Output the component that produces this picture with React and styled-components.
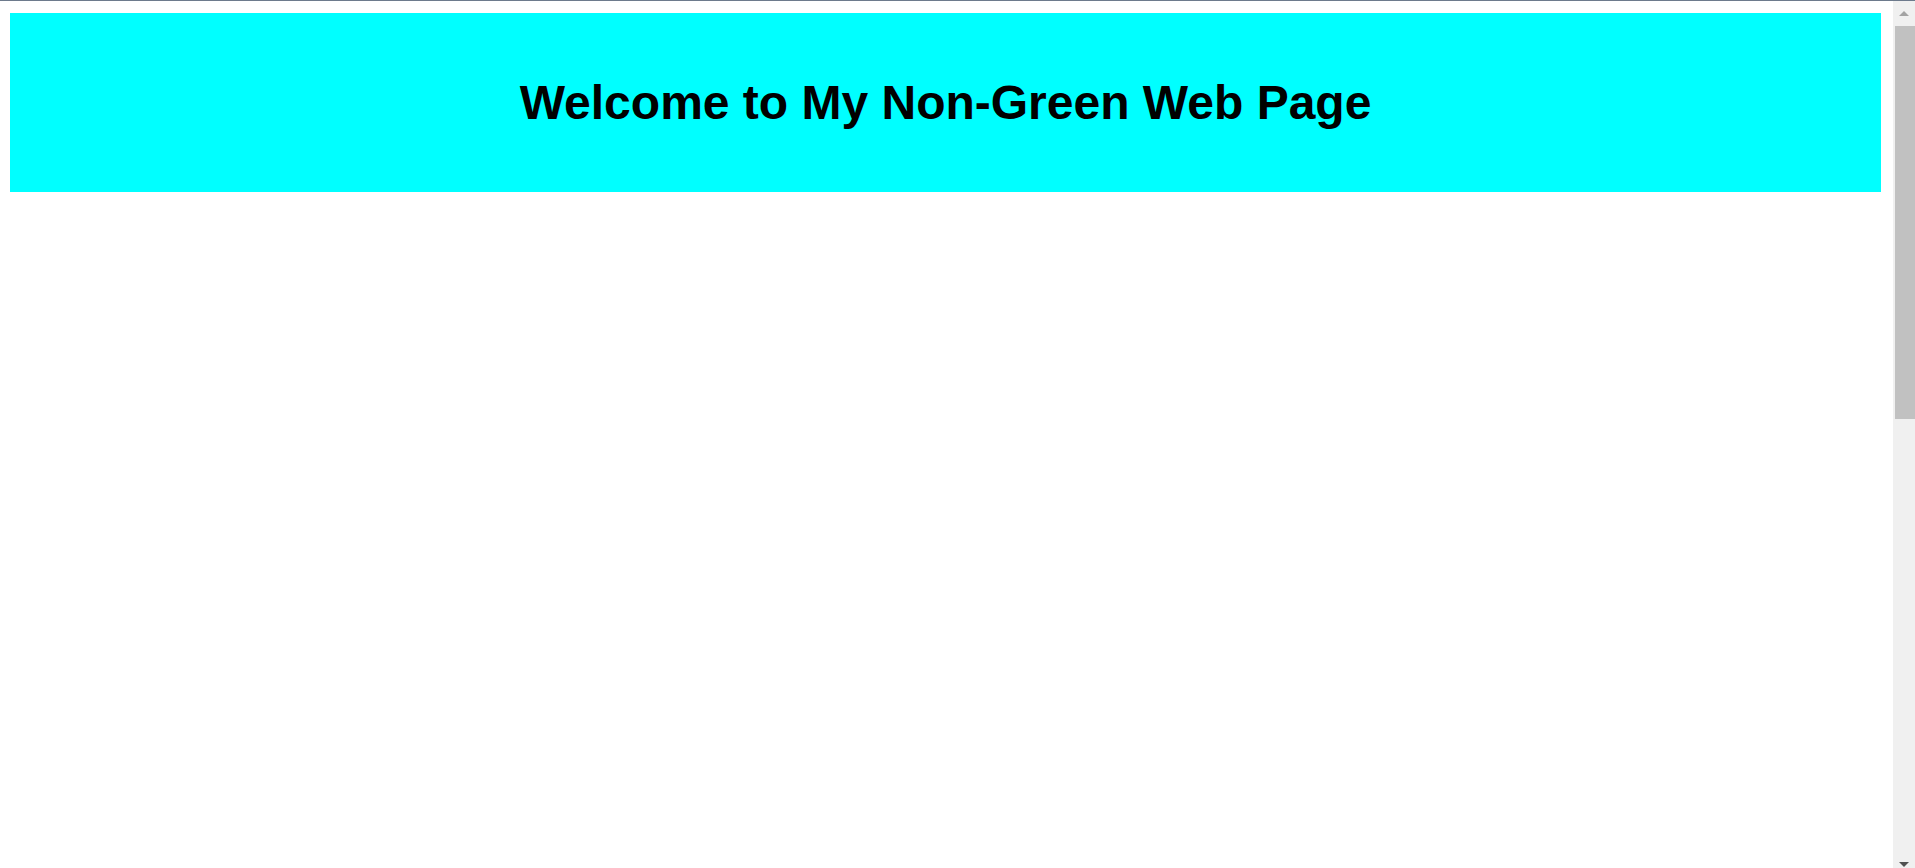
import React from 'react';
import styled, { createGlobalStyle } from 'styled-components';

const trackColor = '#f0f0f0';
const thumbColor = '#c1c1c1';

const GlobalStyle = createGlobalStyle`
    html, body {
        margin: 0;
        padding: 0;
        overflow: hidden;
        background: #ffffff;
    }
`;

export default function App(){
    return (
        <Screen>
            <GlobalStyle />
            <TopEdge />
            <Frame>
                <Page>
                    <Banner>
                        <Title>Welcome to My Non-Green Web Page</Title>
                    </Banner>
                </Page>
                <ScrollBar>
                    <ArrowButton>
                        <Arrow dir="up" />
                    </ArrowButton>
                    <Track>
                        <Thumb />
                    </Track>
                    <ArrowButton>
                        <Arrow dir="down" />
                    </ArrowButton>
                </ScrollBar>
            </Frame>
        </Screen>
    );
}

const Screen = styled.div`
    display: flex;
    flex-direction: column;
    width: 100vw;
    height: 100vh;
    overflow: hidden;
`;

const TopEdge = styled.div`
    flex: none;
    height: 1px;
    background: #6d7a8c;
`;

const Frame = styled.div`
    flex: none;
    display: flex;
    height: 876px;
`;

const Page = styled.main`
    flex: 1;
    padding: 12px 12px 0 10px;
    overflow: hidden;
`;

const Banner = styled.header`
    padding: 62px 0;
    background: #00ffff;
    text-align: center;
`;

const Title = styled.h1`
    margin: 0;
    font-family: "Liberation Sans", Arial, sans-serif;
    font-size: 48px;
    font-weight: bold;
    color: #000000;
`;

// Scrollbar
const ScrollBar = styled.div`
    flex: none;
    display: flex;
    flex-direction: column;
    width: 22px;
    background: ${trackColor};
`;

const ArrowButton = styled.div`
    flex: none;
    display: flex;
    align-items: center;
    justify-content: center;
    height: 25px;
`;

const Arrow = styled.span`
    width: 0;
    height: 0;
    border-left: 5px solid transparent;
    border-right: 5px solid transparent;
    ${props => props.dir === 'up'
        ? 'border-bottom: 5px solid #a3a3a3;'
        : 'border-top: 5px solid #505050;'}
`;

const Track = styled.div`
    flex: 1;
    padding-left: 2px;
`;

const Thumb = styled.div`
    height: 393px;
    background: ${thumbColor};
`;
